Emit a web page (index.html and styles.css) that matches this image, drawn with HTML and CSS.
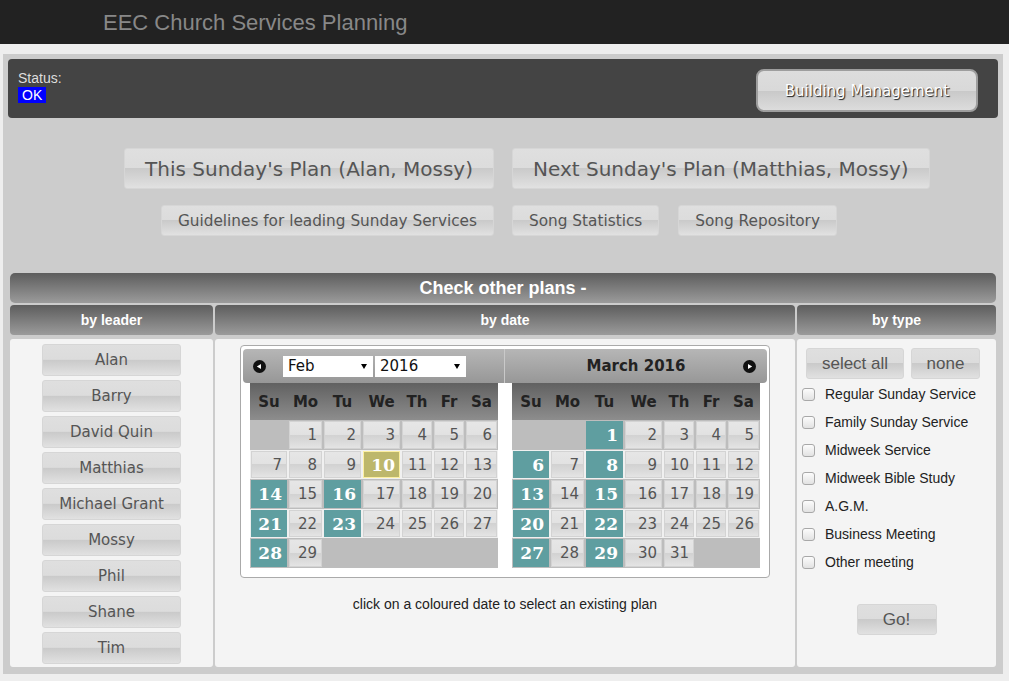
FILE: index.html
```html
<!DOCTYPE html>
<html lang="en">
<head>
  <meta charset="UTF-8" />
  <title>EEC Church Services Planning</title>
  <link rel="stylesheet" href="styles.css">
</head>
<body>

  <header>
    <h1>EEC Church Services Planning</h1>
  </header>

  <div class="page">

    <!-- Status Bar -->
    <div class="status-bar">
      <div class="status">
        <div>Status:</div>
        <span class="status-ok">OK</span>
      </div>
      <button type="button" class="building-btn">Building Management</button>
    </div>

    <!-- Plan Links -->
    <div class="plan-links">
      <div class="left-col">
        <button type="button" class="btn btn-big">This Sunday's Plan (Alan, Mossy)</button>
      </div>
      <div class="right-col">
        <button type="button" class="btn btn-big">Next Sunday's Plan (Matthias, Mossy)</button>
      </div>
      <div class="left-col">
        <button type="button" class="btn btn-small">Guidelines for leading Sunday Services</button>
      </div>
      <div class="right-col">
        <button type="button" class="btn btn-small">Song Statistics</button>
        <button type="button" class="btn btn-small">Song Repository</button>
      </div>
    </div>

    <!-- Other Plans -->
    <div class="other-plans">
      <div class="bar bar-title">Check other plans -</div>
      <div class="bar">by leader</div>
      <div class="bar">by date</div>
      <div class="bar">by type</div>

      <div class="panel leader-panel">
        <button type="button" class="btn leader-btn">Alan</button>
        <button type="button" class="btn leader-btn">Barry</button>
        <button type="button" class="btn leader-btn">David Quin</button>
        <button type="button" class="btn leader-btn">Matthias</button>
        <button type="button" class="btn leader-btn">Michael Grant</button>
        <button type="button" class="btn leader-btn">Mossy</button>
        <button type="button" class="btn leader-btn">Phil</button>
        <button type="button" class="btn leader-btn">Shane</button>
        <button type="button" class="btn leader-btn">Tim</button>
      </div>

      <div class="panel date-panel">
        <div class="calendar">

          <!-- February -->
          <div class="month">
            <div class="month-head month-head-first">
              <svg class="nav-icon" width="13" height="13" viewBox="0 0 13 13">
                <circle cx="6.5" cy="6.5" r="6.5" fill="#111"/>
                <polygon points="3.8,6.5 8,3.9 8,9.1" fill="#fff"/>
              </svg>
              <div class="select select-month"><span>Feb</span><span class="caret"></span></div>
              <div class="select select-year"><span>2016</span><span class="caret"></span></div>
            </div>
            <table class="days">
              <thead>
                <tr><th>Su</th><th>Mo</th><th>Tu</th><th>We</th><th>Th</th><th>Fr</th><th>Sa</th></tr>
              </thead>
              <tbody>
                <tr class="odd">
                  <td></td>
                  <td><span class="day">1</span></td>
                  <td><span class="day">2</span></td>
                  <td><span class="day">3</span></td>
                  <td><span class="day">4</span></td>
                  <td><span class="day">5</span></td>
                  <td><span class="day">6</span></td>
                </tr>
                <tr class="even">
                  <td><span class="day">7</span></td>
                  <td><span class="day">8</span></td>
                  <td><span class="day">9</span></td>
                  <td><span class="day today">10</span></td>
                  <td><span class="day">11</span></td>
                  <td><span class="day">12</span></td>
                  <td><span class="day">13</span></td>
                </tr>
                <tr class="odd">
                  <td><span class="day plan">14</span></td>
                  <td><span class="day">15</span></td>
                  <td><span class="day plan">16</span></td>
                  <td><span class="day">17</span></td>
                  <td><span class="day">18</span></td>
                  <td><span class="day">19</span></td>
                  <td><span class="day">20</span></td>
                </tr>
                <tr class="even">
                  <td><span class="day plan">21</span></td>
                  <td><span class="day">22</span></td>
                  <td><span class="day plan">23</span></td>
                  <td><span class="day">24</span></td>
                  <td><span class="day">25</span></td>
                  <td><span class="day">26</span></td>
                  <td><span class="day">27</span></td>
                </tr>
                <tr class="odd">
                  <td><span class="day plan">28</span></td>
                  <td><span class="day">29</span></td>
                  <td></td><td></td><td></td><td></td><td></td>
                </tr>
              </tbody>
            </table>
          </div>

          <!-- March -->
          <div class="month">
            <div class="month-head month-head-last">
              <span></span>
              <span class="month-title">March 2016</span>
              <svg class="nav-icon" width="13" height="13" viewBox="0 0 13 13">
                <circle cx="6.5" cy="6.5" r="6.5" fill="#111"/>
                <polygon points="9.2,6.5 5,3.9 5,9.1" fill="#fff"/>
              </svg>
            </div>
            <table class="days">
              <thead>
                <tr><th>Su</th><th>Mo</th><th>Tu</th><th>We</th><th>Th</th><th>Fr</th><th>Sa</th></tr>
              </thead>
              <tbody>
                <tr class="odd">
                  <td></td>
                  <td></td>
                  <td><span class="day plan">1</span></td>
                  <td><span class="day">2</span></td>
                  <td><span class="day">3</span></td>
                  <td><span class="day">4</span></td>
                  <td><span class="day">5</span></td>
                </tr>
                <tr class="even">
                  <td><span class="day plan">6</span></td>
                  <td><span class="day">7</span></td>
                  <td><span class="day plan">8</span></td>
                  <td><span class="day">9</span></td>
                  <td><span class="day">10</span></td>
                  <td><span class="day">11</span></td>
                  <td><span class="day">12</span></td>
                </tr>
                <tr class="odd">
                  <td><span class="day plan">13</span></td>
                  <td><span class="day">14</span></td>
                  <td><span class="day plan">15</span></td>
                  <td><span class="day">16</span></td>
                  <td><span class="day">17</span></td>
                  <td><span class="day">18</span></td>
                  <td><span class="day">19</span></td>
                </tr>
                <tr class="even">
                  <td><span class="day plan">20</span></td>
                  <td><span class="day">21</span></td>
                  <td><span class="day plan">22</span></td>
                  <td><span class="day">23</span></td>
                  <td><span class="day">24</span></td>
                  <td><span class="day">25</span></td>
                  <td><span class="day">26</span></td>
                </tr>
                <tr class="odd">
                  <td><span class="day plan">27</span></td>
                  <td><span class="day">28</span></td>
                  <td><span class="day plan">29</span></td>
                  <td><span class="day">30</span></td>
                  <td><span class="day">31</span></td>
                  <td></td><td></td>
                </tr>
              </tbody>
            </table>
          </div>

        </div>
        <p class="hint">click on a coloured date to select an existing plan</p>
      </div>

      <div class="panel type-panel">
        <div class="type-buttons">
          <button type="button" class="btn type-btn select-all-btn">select all</button>
          <button type="button" class="btn type-btn none-btn">none</button>
        </div>
        <ul class="type-list">
          <li><label><input type="checkbox">Regular Sunday Service</label></li>
          <li><label><input type="checkbox">Family Sunday Service</label></li>
          <li><label><input type="checkbox">Midweek Service</label></li>
          <li><label><input type="checkbox">Midweek Bible Study</label></li>
          <li><label><input type="checkbox">A.G.M.</label></li>
          <li><label><input type="checkbox">Business Meeting</label></li>
          <li><label><input type="checkbox">Other meeting</label></li>
        </ul>
        <div class="go-row">
          <button type="button" class="btn type-btn go-btn">Go!</button>
        </div>
      </div>
    </div>

  </div>

</body>
</html>
```

FILE: styles.css
```css
body {
  margin: 0;
  background-color: #eeeeee;
  font-family: "Liberation Sans", Arial, sans-serif;
  color: #222;
}

header {
  height: 44px;
  box-sizing: border-box;
  padding: 10px 0 0 103px;
  background-color: #222222;
}

header h1 {
  margin: 0;
  font-size: 22px;
  line-height: 25px;
  font-weight: normal;
  color: #888888;
}

.page {
  margin: 10px 6px 0 3px;
  padding: 5px;
  background-color: #cccccc;
}

/* Status bar */
.status-bar {
  display: flex;
  justify-content: space-between;
  align-items: flex-start;
  height: 59px;
  box-sizing: border-box;
  padding: 10px 20px 0 10px;
  background-color: #444444;
  border-radius: 4px;
}

.status {
  font-size: 14px;
  line-height: 16px;
  color: #dddddd;
  padding-top: 1px;
}

.status-ok {
  display: inline-block;
  margin-top: 1px;
  padding: 0 4px;
  background-color: #0000ff;
  color: #ffffff;
}

.building-btn {
  width: 222px;
  height: 43px;
  padding: 0;
  border: 2px solid #9e9e9e;
  border-radius: 8px;
  background: linear-gradient(#dddddd 0%, #d9d9d9 50%, #c9c9c9 52%, #dcdcdc 100%);
  font-family: "DejaVu Sans", Verdana, sans-serif;
  font-size: 15px;
  color: #ffffff;
  text-shadow: 1px 1px 1px #1a1a1a;
  cursor: pointer;
}

/* Glass buttons */
.btn {
  font-family: "DejaVu Sans", Verdana, sans-serif;
  color: #555555;
  border: 1px solid #d6d6d6;
  border-radius: 3px;
  background: linear-gradient(#dfdfdf 0%, #dcdcdc 48%, #cacaca 50%, #d4d4d4 72%, #e1e1e1 100%);
  cursor: pointer;
}

.btn:hover {
  opacity: 0.85;
}

.plan-links {
  display: grid;
  grid-template-columns: 1fr 1fr;
  column-gap: 18px;
  row-gap: 16px;
  padding: 30px 0 35px;
}

.left-col {
  display: flex;
  justify-content: flex-end;
}

.right-col {
  display: flex;
  gap: 19px;
}

.btn-big {
  height: 41px;
  padding: 0 20px;
  font-size: 20px;
}

.btn-small {
  height: 31px;
  padding: 0 16px;
  font-size: 15.3px;
}

/* Other plans section */
.other-plans {
  display: grid;
  grid-template-columns: 203px 1fr 199px;
  grid-template-rows: 30px 30px 330px;
  gap: 2px;
  padding: 2px;
}

.bar {
  display: flex;
  align-items: center;
  justify-content: center;
  background: linear-gradient(#5d5d5d, #9b9b9b);
  border-radius: 4px;
  color: #ffffff;
  font-weight: bold;
  font-size: 14px;
}

.bar-title {
  grid-column: 1 / 4;
  font-size: 18px;
  border-radius: 5px;
}

.panel {
  margin-top: 2px;
  background-color: #f4f4f4;
  border-radius: 3px;
}

.leader-panel {
  display: flex;
  flex-direction: column;
  align-items: center;
  gap: 4px;
  padding-top: 5px;
}

.leader-btn {
  width: 139px;
  height: 32px;
  padding: 0;
  font-size: 15px;
}

/* Calendar */
.date-panel {
  display: flex;
  flex-direction: column;
  align-items: center;
  padding-top: 6px;
}

.calendar {
  display: flex;
  width: 530px;
  box-sizing: border-box;
  padding: 3px 2px 9px;
  background-color: #ffffff;
  border: 1px solid #aaaaaa;
  border-radius: 4px;
}

.month {
  width: 262px;
}

.month-head {
  height: 34px;
  box-sizing: border-box;
  background: linear-gradient(#b6b6b6, #979797);
  font-family: "DejaVu Sans", Verdana, sans-serif;
}

.month-head-first {
  display: flex;
  align-items: center;
  padding-left: 10px;
  border-right: 1px solid #c9c9c9;
  border-radius: 4px 0 0 4px;
}

.month-head-last {
  display: grid;
  grid-template-columns: 13px 1fr 13px;
  align-items: center;
  padding: 0 11px;
  border-radius: 0 4px 4px 0;
}

.nav-icon {
  display: block;
}

.month-head-first .nav-icon {
  margin-right: 17px;
}

.month-title {
  text-align: center;
  font-weight: bold;
  font-size: 15px;
  color: #222222;
}

.select {
  display: flex;
  align-items: center;
  justify-content: space-between;
  height: 21px;
  box-sizing: border-box;
  padding: 0 6px 0 5px;
  background-color: #ffffff;
  font-size: 15px;
  color: #111111;
}

.select-month {
  width: 90px;
  margin-right: 2px;
}

.select-year {
  width: 91px;
}

.caret {
  border-left: 3px solid transparent;
  border-right: 3px solid transparent;
  border-top: 5px solid #000000;
}

.days {
  width: 248px;
  margin-left: 7px;
  border-collapse: collapse;
  table-layout: fixed;
  font-family: "DejaVu Sans", Verdana, sans-serif;
}

.days th {
  height: 37px;
  padding: 0;
  background: linear-gradient(#616161, #8d8d8d);
  font-size: 15px;
  font-weight: bold;
  color: #222222;
}

.days th:nth-child(1) { width: 38px; }
.days th:nth-child(2) { width: 35px; }
.days th:nth-child(3) { width: 39px; }
.days th:nth-child(4) { width: 39px; }
.days th:nth-child(5) { width: 32px; }
.days th:nth-child(6) { width: 32px; }
.days th:nth-child(7) { width: 33px; }

.days tr.odd {
  background-color: #bdbdbd;
}

.days tr.even {
  background-color: #f0f0f0;
}

.days td {
  padding: 1px;
  height: 27.6px;
}

.day {
  display: block;
  height: 27.6px;
  box-sizing: border-box;
  padding-right: 4px;
  line-height: 26px;
  text-align: right;
  font-size: 15px;
  color: #555555;
  border: 1px solid #d3d3d3;
  background: linear-gradient(#e6e6e6 0%, #e2e2e2 48%, #d2d2d2 50%, #dadada 75%, #e4e4e4 100%);
}

.day.plan {
  background: #5f9ea0;
  border-color: #5f9ea0;
  color: #ffffff;
  font-family: "DejaVu Serif", Georgia, serif;
  font-weight: bold;
  font-size: 17px;
}

.day.today {
  background: #bdb76b;
  border-color: #fcefa1;
  color: #ffffff;
  font-family: "DejaVu Serif", Georgia, serif;
  font-weight: bold;
  font-size: 17px;
}

.hint {
  margin: 18px 0 0;
  font-size: 14px;
  color: #222222;
}

/* Type filter */
.type-panel {
  padding-top: 9px;
}

.type-buttons {
  display: flex;
  gap: 7px;
  padding-left: 9px;
  margin-bottom: 1px;
}

.type-btn {
  height: 31px;
  padding: 0;
  font-family: "Liberation Sans", Arial, sans-serif;
  font-size: 17px;
}

.select-all-btn {
  width: 98px;
}

.none-btn {
  width: 69px;
}

.type-list {
  list-style: none;
  margin: 0;
  padding: 0;
}

.type-list li {
  height: 28px;
  display: flex;
  align-items: center;
  font-size: 14px;
  color: #222222;
}

.type-list label {
  display: flex;
  align-items: center;
}

.type-list input {
  appearance: none;
  width: 13px;
  height: 13px;
  margin: 0 10px 0 5px;
  border: 1px solid #a8a8a8;
  border-radius: 3px;
  background: linear-gradient(#fcfcfc, #e2e2e2);
}

.go-row {
  margin-top: 28px;
  text-align: center;
}

.go-btn {
  width: 80px;
}
```
